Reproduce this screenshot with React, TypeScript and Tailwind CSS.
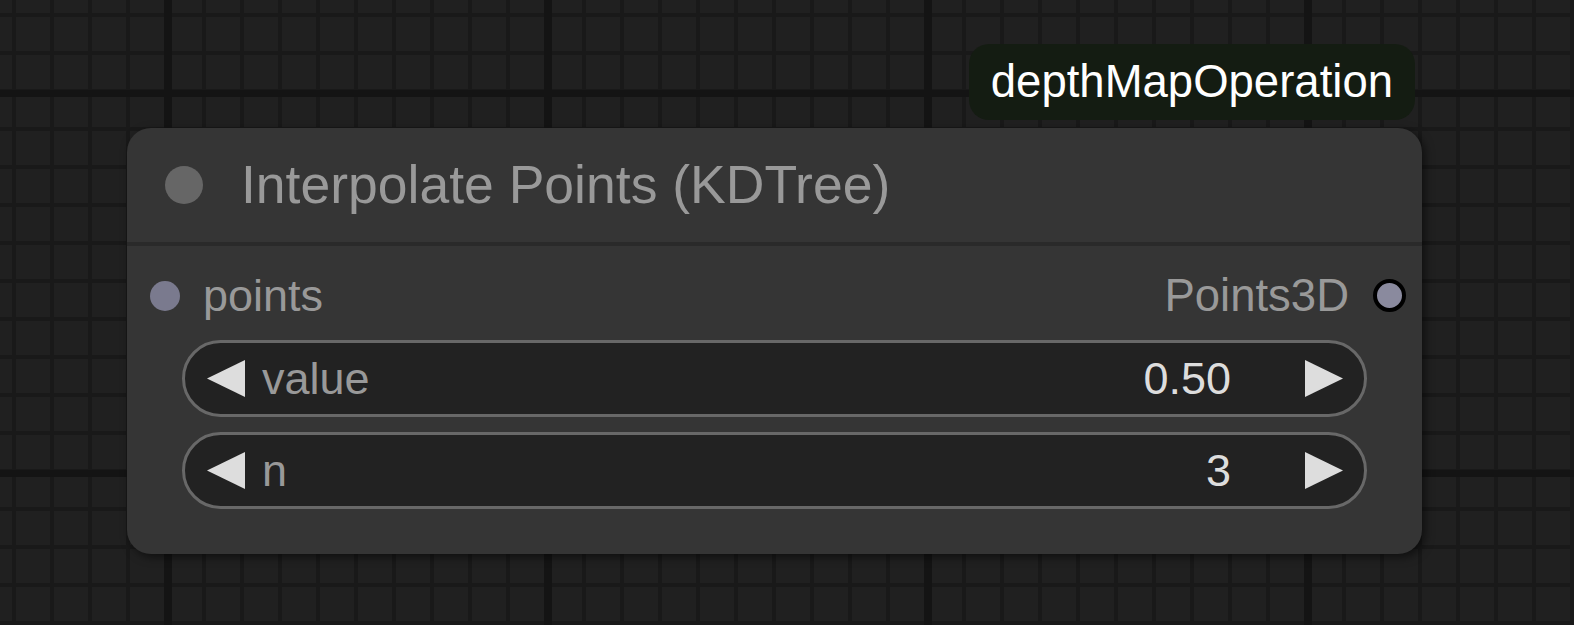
const widgets = [
  { label: "value", value: "0.50" },
  { label: "n", value: "3" }
];

function Arrow({ dir }: { dir: "left" | "right" }) {
  return (
    <svg width="38" height="38" viewBox="0 0 38 38" className="shrink-0">
      {dir === "left" ? (
        <polygon points="38,0 38,37 0,18.5" fill="#dddddd" />
      ) : (
        <polygon points="0,0 0,37 38,18.5" fill="#dddddd" />
      )}
    </svg>
  );
}

export default function App() {
  return (
    <div
      className="h-[625px] w-[1574px] overflow-hidden bg-[#202020] pl-[127px] pt-[44px] [font-family:'Liberation_Sans',Arial,sans-serif] [background-image:linear-gradient(to_right,#141414_8px,transparent_8px),linear-gradient(to_bottom,#141414_7px,transparent_7px),linear-gradient(to_right,#191919_4px,transparent_4px),linear-gradient(to_bottom,#191919_4px,transparent_4px)] [background-size:380px_100%,100%_380px,38px_100%,100%_38px] [background-position:164px_0,0_90px,12px_0,0_13px]"
    >
      <div className="flex w-[1295px] flex-col">
        <div className="flex justify-end pr-[7px]">
          <div className="flex h-[76px] items-center rounded-[20px] bg-[#141c12] px-[22px] text-[45.5px] leading-none text-white">
            depthMapOperation
          </div>
        </div>

        <div className="mt-[8px] flex h-[426px] flex-col rounded-[24px] bg-[#353535] shadow-[3px_3px_10px_rgba(0,0,0,0.55)]">
          <div className="flex h-[114px] items-center pl-[38px]">
            <div className="h-[38px] w-[38px] rounded-full bg-[#666666]" />
            <span className="ml-[38px] text-[53.5px] leading-none text-[#999999]">
              Interpolate Points (KDTree)
            </span>
          </div>
          <div className="h-[4px] bg-[#2a2a2a]" />

          <div className="flex flex-col pt-[12px]">
            <div className="flex h-[75px] items-center pl-[23px] pr-[16px]">
              <div className="h-[30px] w-[30px] rounded-full bg-[#7a7a8e]" />
              <span className="ml-[23px] text-[45px] leading-none text-[#999999]">points</span>
              <span className="ml-auto text-[45.5px] leading-none text-[#999999]">Points3D</span>
              <div className="ml-[24px] h-[33px] w-[33px] rounded-full border-[4px] border-black bg-[#8a8a9e]" />
            </div>

            <div className="mt-[7px] flex flex-col gap-[15px] px-[55px]">
              {widgets.map((w) => (
                <div
                  key={w.label}
                  className="flex h-[77px] items-center rounded-full border-[3px] border-[#686868] bg-[#222222] pl-[22px] pr-[21px] text-[45px] leading-none"
                >
                  <Arrow dir="left" />
                  <span className="ml-[17px] text-[#999999]">{w.label}</span>
                  <span className="ml-auto text-[#dddddd]">{w.value}</span>
                  <span className="ml-[74px]">
                    <Arrow dir="right" />
                  </span>
                </div>
              ))}
            </div>
          </div>
        </div>
      </div>
    </div>
  );
}
